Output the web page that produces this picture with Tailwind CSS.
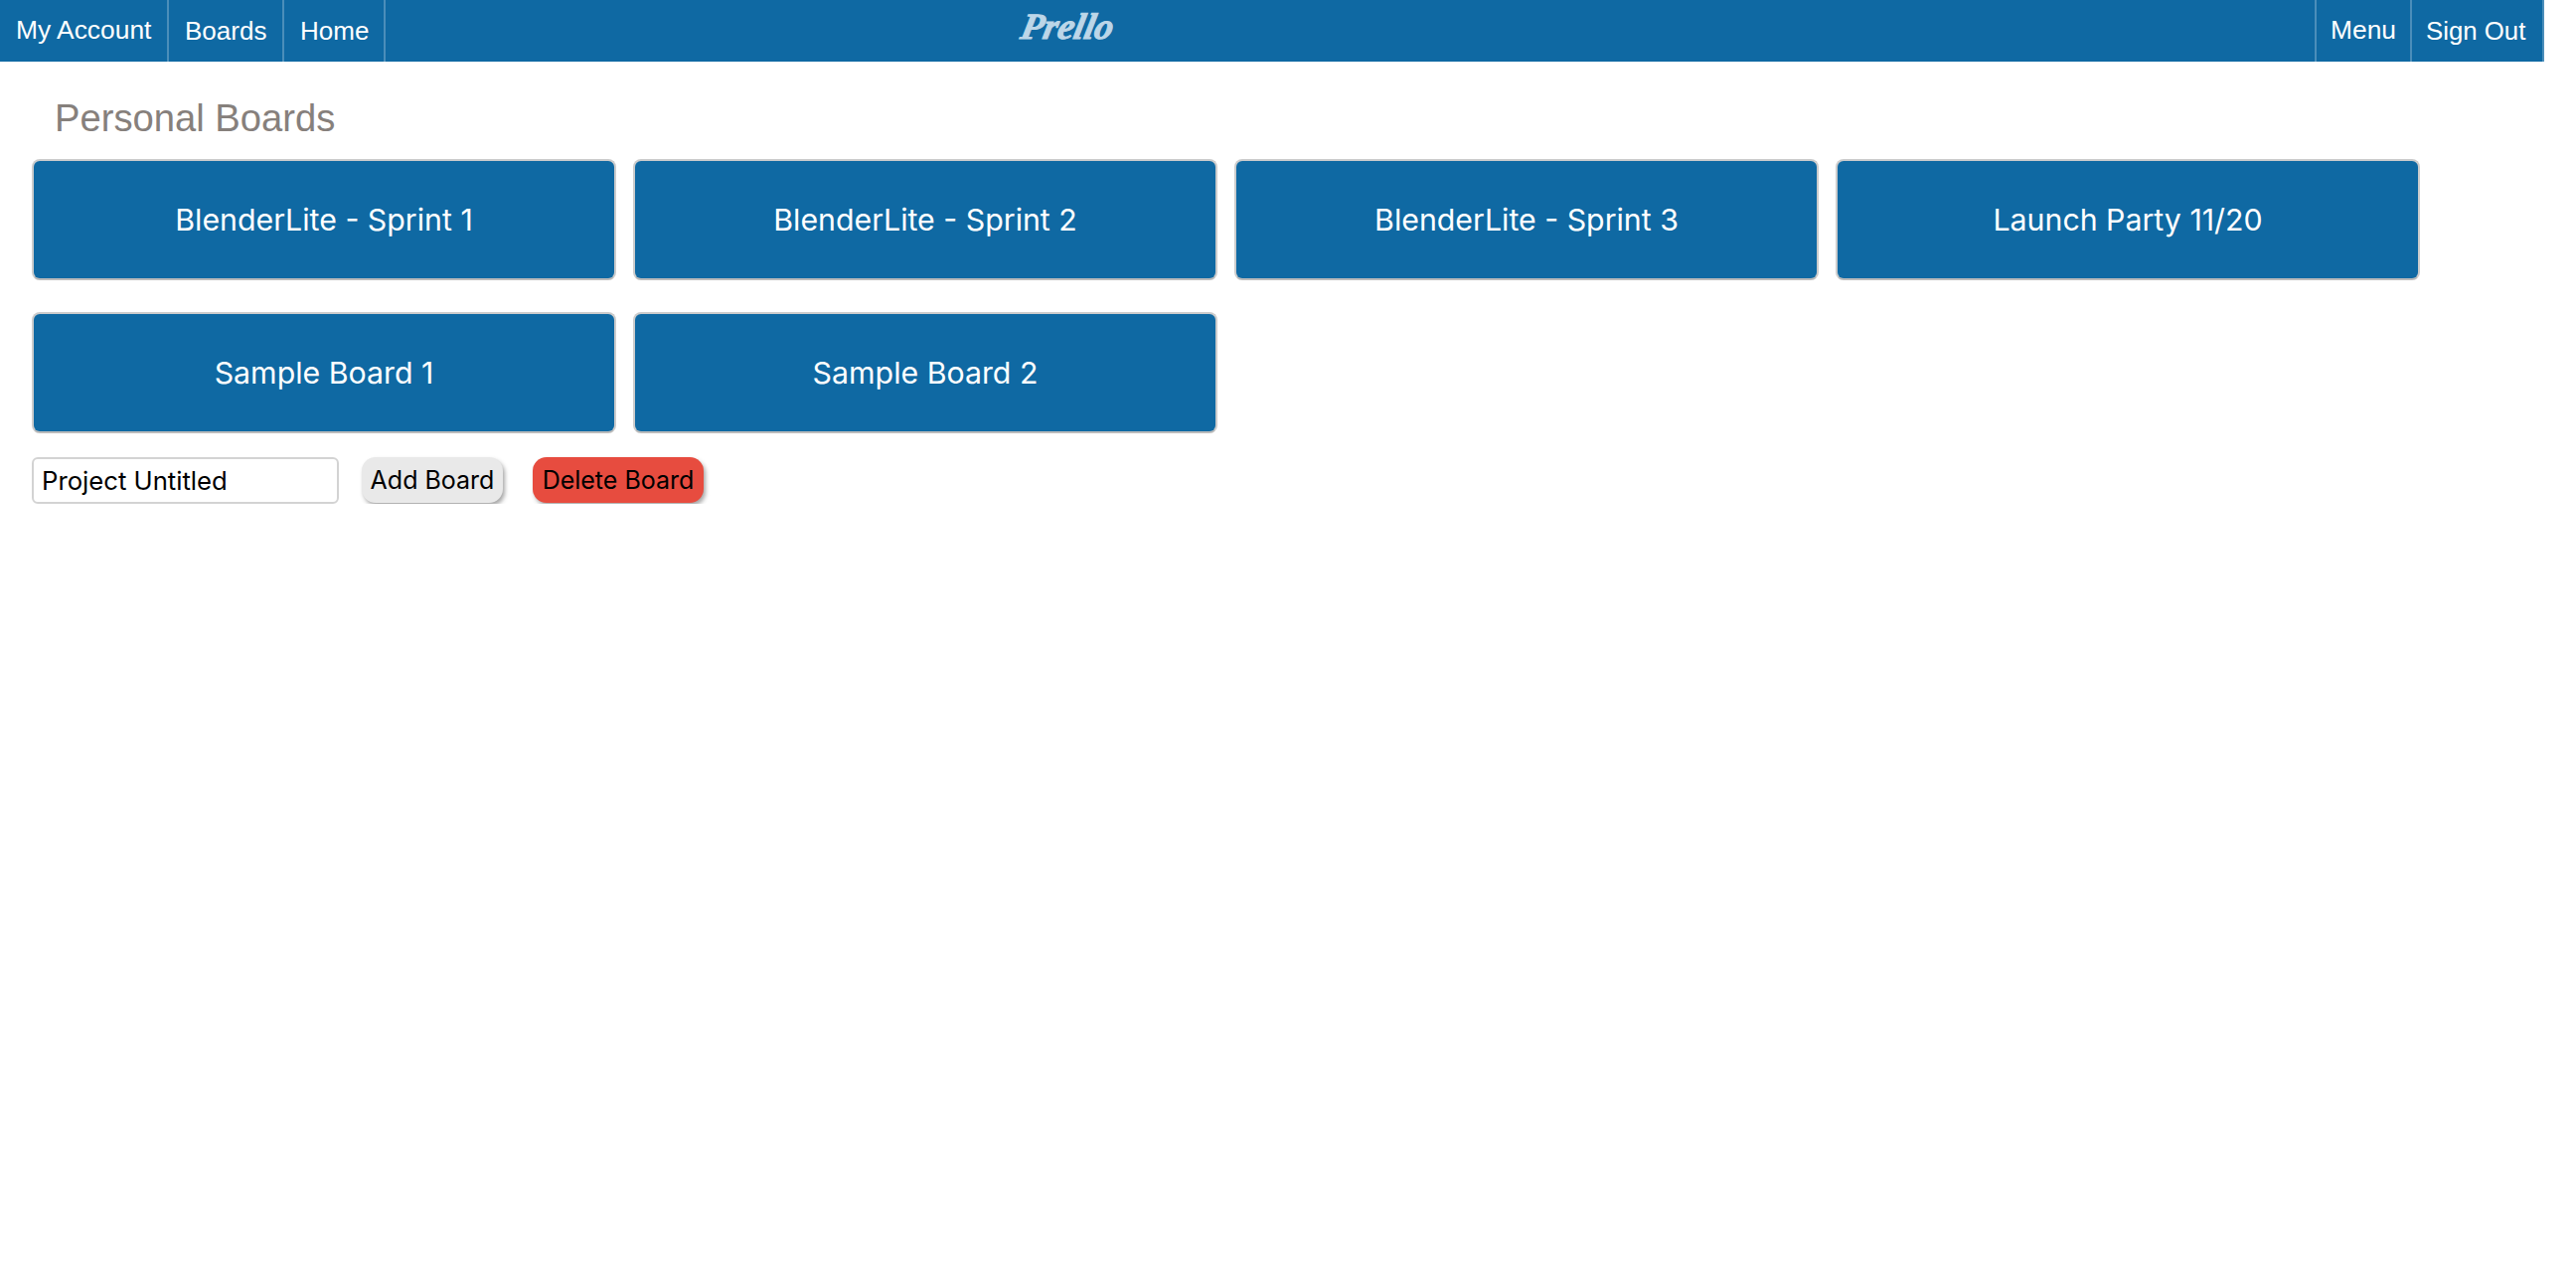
<!DOCTYPE html>
<html lang="en">
<head>
    <meta charset="UTF-8">
    <title>Prello - Boards</title>
    <script src="https://cdn.jsdelivr.net/npm/@tailwindcss/browser@4"></script>
</head>
<body class="bg-white font-['Liberation_Sans',sans-serif] w-[2560px]">
    <!-- top nav -->
    <nav class="relative flex justify-between h-[62px] bg-[#0f69a3] text-white text-[26px]">
        <ul class="flex">
            <li class="flex items-center w-[170px] pl-4 border-r-2 border-white/25 text-[26.4px]">My Account</li>
            <li class="flex items-center w-[116px] pl-4 border-r-2 border-white/25">Boards</li>
            <li class="flex items-center w-[102px] pl-4 border-r-2 border-white/25">Home</li>
        </ul>
        <div class="absolute left-[1028px] top-[4px] -skew-x-12 font-['Liberation_Serif',serif] font-bold italic text-[37px] leading-[46px] text-[#bcd6e8] [-webkit-text-stroke:1px_#bcd6e8]">Prello</div>
        <ul class="flex">
            <li class="flex items-center w-[96px] pl-[14px] border-l-2 border-white/25 text-[26.4px]">Menu</li>
            <li class="flex items-center w-[135px] pl-[14px] border-x-2 border-white/25 text-[25.8px]">Sign Out</li>
        </ul>
    </nav>

    <main class="pl-[32px]">
        <h2 class="pl-[23px] pt-[34px] text-[38.2px] leading-[46px] text-[#86807c]">Personal Boards</h2>

        <div class="flex flex-wrap gap-x-[17px] gap-y-[32px] mt-[18px] w-[2500px] font-['Inter',sans-serif] text-[30.3px] text-white">
            <div class="flex items-center justify-center w-[588px] h-[122px] pt-[2px] bg-[#0f69a3] border-2 border-[#cccccc] border-b-[#bbbbbb] rounded-lg">BlenderLite - Sprint 1</div>
            <div class="flex items-center justify-center w-[588px] h-[122px] pt-[2px] bg-[#0f69a3] border-2 border-[#cccccc] border-b-[#bbbbbb] rounded-lg">BlenderLite - Sprint 2</div>
            <div class="flex items-center justify-center w-[588px] h-[122px] pt-[2px] bg-[#0f69a3] border-2 border-[#cccccc] border-b-[#bbbbbb] rounded-lg">BlenderLite - Sprint 3</div>
            <div class="flex items-center justify-center w-[588px] h-[122px] pt-[2px] bg-[#0f69a3] border-2 border-[#cccccc] border-b-[#bbbbbb] rounded-lg">Launch Party 11/20</div>
            <div class="flex items-center justify-center w-[588px] h-[122px] pt-[2px] bg-[#0f69a3] border-2 border-[#cccccc] border-b-[#bbbbbb] rounded-lg">Sample Board 1</div>
            <div class="flex items-center justify-center w-[588px] h-[122px] pt-[2px] bg-[#0f69a3] border-2 border-[#cccccc] border-b-[#bbbbbb] rounded-lg">Sample Board 2</div>
        </div>

        <div class="flex items-start mt-[24px] font-['Inter',sans-serif] text-[25px] text-black">
            <input type="text" value="Project Untitled" class="w-[309px] h-[47px] px-[8px] text-[25.7px] bg-white border-2 border-[#d3d3d3] rounded-md">
            <button class="ml-[23px] w-[142px] h-[46px] pt-[2px] bg-[#e9e9e9] rounded-[14px] shadow-[2px_3px_4px_rgba(0,0,0,0.35)]">Add Board</button>
            <button class="ml-[30px] w-[172px] h-[46px] pt-[2px] bg-[#e74c3f] rounded-[14px] shadow-[2px_3px_4px_rgba(0,0,0,0.35)]">Delete Board</button>
        </div>
    </main>
</body>
</html>
